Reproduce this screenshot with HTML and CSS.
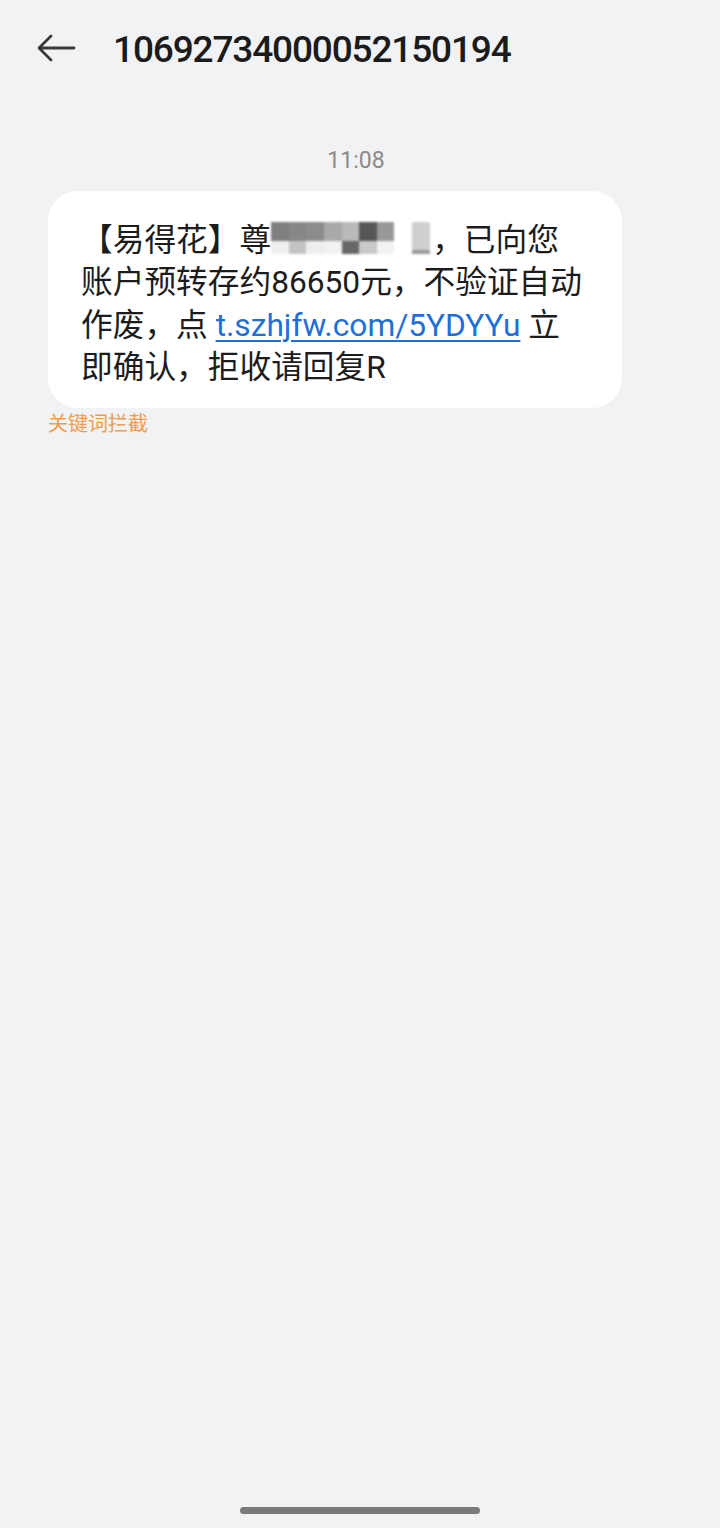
FILE: index.html
```html
<!DOCTYPE html>
<html lang="zh-CN">
<head>
    <meta charset="UTF-8">
    <meta name="viewport" content="width=device-width, initial-scale=1.0">
    <title>10692734000052150194</title>
    <link rel="stylesheet" href="styles.css">
</head>
<body>

    <div class="screen">
        <div class="topbar">
            <svg class="back" width="40" height="30" viewBox="0 0 40 30">
                <path d="M38 15 H3 M15 3 L3 15 L15 27" fill="none" stroke="#3a3a3a" stroke-width="2.8" stroke-linecap="round" stroke-linejoin="round"/>
            </svg>
            <div class="title">10692734000052150194</div>
        </div>

        <div class="thread">
            <div class="time">11:08</div>

            <div class="bubble">
                【易得花】尊<span class="mosaic"><i class="m1"></i><i class="m2"></i><i class="m3"></i><i class="m4"></i><i class="m5"></i><i class="m6"></i><i class="m7"></i><i class="gap"></i><i class="m8"></i></span>，已向您<br>账户预转存约86650元，不验证自动<br>作废，点 <a class="link" href="#">t.szhjfw.com/5YDYYu</a> 立<br>即确认，拒收请回复R
            </div>
            <div class="tag">关键词拦截</div>
        </div>

        <div class="home-bar"></div>
    </div>

</body>
</html>
```

FILE: styles.css
```css
body {
    margin: 0;
    background-color: #f1f2f4;
    font-family: "Noto Sans CJK SC", "Noto Sans", sans-serif;
    color: #1a1a1a;
}
.screen {
    height: 1528px;
    display: flex;
    flex-direction: column;
}
.topbar {
    height: 96px;
    display: flex;
    align-items: center;
    padding-left: 36px;
}
.back {
    margin-right: 37px;
}
.title {
    font-family: Roboto, "Noto Sans", sans-serif;
    font-size: 37px;
    font-weight: 500;
    letter-spacing: -1.15px;
    color: #1b1b1b;
    margin-top: 2px;
}
.thread {
    flex: 1;
    padding: 50px 0 0 48px;
}
.time {
    width: 616px;
    text-align: center;
    font-family: Roboto, sans-serif;
    font-size: 23px;
    color: #8a8a8a;
    line-height: 30px;
    margin-bottom: 15px;
}
.bubble {
    width: 510px;
    background: #ffffff;
    border-radius: 30px;
    padding: 29px 31px 19px 33px;
    font-family: Roboto, "Noto Sans CJK SC", sans-serif;
    font-size: 31.7px;
    line-height: 42.3px;
    color: #1c1c1c;
}
.link {
    color: #1f6fd6;
    text-decoration: underline;
    text-underline-offset: 4px;
    text-decoration-thickness: 2px;
}
.mosaic {
    display: inline-flex;
    width: 161px;
    height: 32px;
    vertical-align: -3px;
    filter: blur(0.8px);
}
.mosaic i {
    display: block;
    width: 17.6px;
    height: 32px;
}
.mosaic .gap {
    width: 18px;
}
.m1 { background: linear-gradient(#7f7f7f 60%, #efefef 60%); }
.m2 { background: linear-gradient(#878787 60%, #c4c4c4 60%); }
.m3 { background: linear-gradient(#8c8c8c 60%, #eeeeee 60%); }
.m4 { background: linear-gradient(#a9a9a9 60%, #f2f2f2 60%); }
.m5 { background: linear-gradient(#bababa 60%, #686868 60%); }
.m6 { background: linear-gradient(#565656 60%, #c9c9c9 60%); }
.m7 { background: linear-gradient(#989898 60%, #f2f2f2 60%); }
.m8 { background: linear-gradient(#cfcfcf 88%, #9a9a9a 88%); }
.tag {
    margin-top: 3px;
    font-size: 20px;
    line-height: 24px;
    color: #f29b4e;
}
.home-bar {
    width: 240px;
    height: 7px;
    border-radius: 4px;
    background: #7a7a7a;
    margin: 0 auto 14px;
}
```
